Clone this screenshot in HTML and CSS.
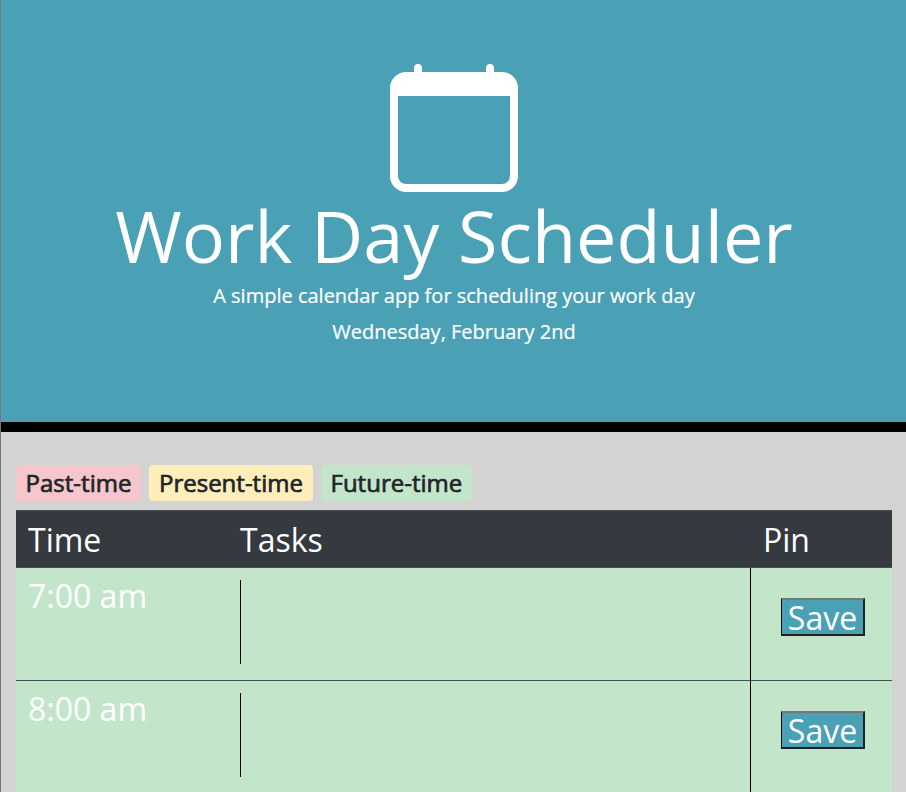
FILE: index.html
```html
<!DOCTYPE html>
<html lang="en">
<head>
<meta charset="utf-8">
<title>Work Day Scheduler</title>
<link rel="stylesheet" href="styles.css">
</head>
<body>
<header class="hero">
<svg class="calendar" viewBox="0 0 16 16" fill="currentColor" aria-hidden="true"><path d="M3.500 0a.5.5 0 0 1 .5.5V1h8V.5a.5.5 0 0 1 1 0V1h1a2 2 0 0 1 2 2v11a2 2 0 0 1-2 2H2a2 2 0 0 1-2-2V3a2 2 0 0 1 2-2h1V.5a.5.500 0 0 1 .5-.5zM1 4v10a1 1 0 0 0 1 1h12a1 1 0 0 0 1-1V4H1z"/></svg>
<h1>Work Day Scheduler</h1>
<p>A simple calendar app for scheduling your work day</p>
<p>Wednesday, February 2nd</p>
</header>
<main>
<div class="legend"><span class="badge past">Past-time</span><span class="badge present">Present-time</span><span class="badge future">Future-time</span></div>
<table>
<thead><tr><th class="time">Time</th><th class="tasks">Tasks</th><th class="pin">Pin</th></tr></thead>
<tbody>
<tr><td>7:00 am</td><td><div class="task"></div></td><td class="action"><button>Save</button></td></tr>
<tr><td>8:00 am</td><td><div class="task"></div></td><td class="action"><button>Save</button></td></tr>
</tbody>
</table>
</main>
</body>
</html>
```
FILE: styles.css
```css
* { box-sizing: border-box; }
body {
  margin: 0;
  height: 792px;
  overflow: hidden;
  border-left: 1px solid #777;
  background: #d3d3d3;
  font-family: "Open Sans", sans-serif;
  font-size: 32px;
  line-height: 1.5;
  color: #fff;
}
.hero {
  height: 432px;
  padding: 64px 0 0 1px;
  border-bottom: 10px solid #000;
  background: #4aa1b6;
  text-align: center;
}
.calendar { display: block; width: 128px; height: 128px; margin: 0 auto; }
h1 { margin: 0 0 8px; font-size: 72px; font-weight: 400; line-height: 86px; }
.hero p { margin: 0 0 16px; font-size: 20px; line-height: 20px; -webkit-text-stroke: 0.2px #fff; }
main { padding: 33px 14px 0 15px; }
.legend { display: flex; gap: 8.4px; height: 45px; }
.badge {
  height: 36px;
  padding: 0 9.6px;
  border-radius: 4px;
  color: #212529;
  font-size: 24px;
  line-height: 36px;
  -webkit-text-stroke: 0.7px #212529;
}
.past { background: #f5c6cb; }
.present { background: #ffeeba; }
.future { background: #c3e6cb; }
table { width: 100%; table-layout: fixed; border-collapse: separate; border-spacing: 0; }
th { height: 58px; padding: 1px 12px 0; background: #343a40; border-top: 1px solid #454d55; border-bottom: 1px solid #454d55; font-weight: 400; line-height: 48px; text-align: left; }
.time { width: 212px; }
.pin { width: 142px; padding-left: 13px; }
td { height: 113px; padding: 12px; vertical-align: top; line-height: 31px; background: #c3e6cb; border-bottom: 1px solid #454d55; }
.task { height: 84px; border-left: 1px solid #000; }
.action { padding: 30px 27px 0 30px; border-left: 1px solid #000; }
button {
  display: block;
  width: 84px;
  height: 38px;
  padding: 1px 0 0;
  border: 2px solid #212121;
  border-top-color: #767676;
  border-left: 1px solid #000;
  background: #4aa1b6;
  color: #fff;
  font: inherit;
  line-height: 34px;
}
```
